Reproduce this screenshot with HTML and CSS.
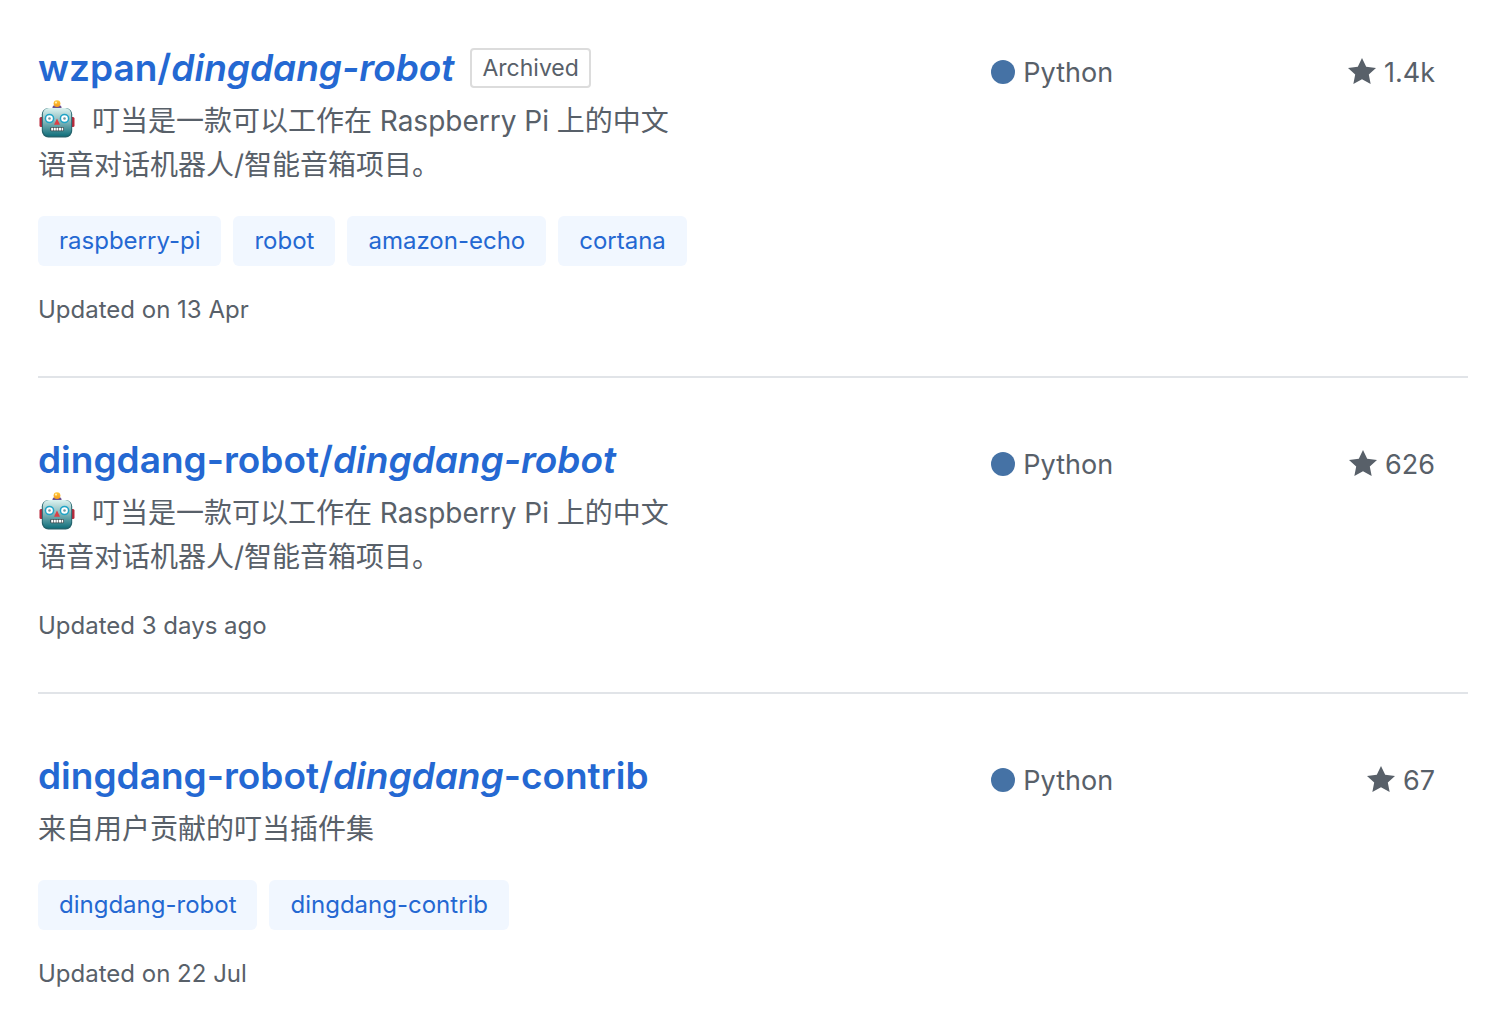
FILE: index.html
```html
<!DOCTYPE html>
<html lang="en">
<head>
    <meta charset="UTF-8">
    <meta name="viewport" content="width=device-width, initial-scale=1.0">
    <title>Repository search results</title>
    <link rel="stylesheet" href="styles.css">
</head>
<body>

<!-- shared icons -->
<svg class="icon-defs" aria-hidden="true">
    <defs>
        <linearGradient id="face" x1="0" y1="0" x2="0" y2="1">
            <stop offset="0" stop-color="#dcf3f0"/>
            <stop offset="0.45" stop-color="#8cbcbf"/>
            <stop offset="1" stop-color="#12707c"/>
        </linearGradient>
        <linearGradient id="bulb" x1="0" y1="0" x2="0" y2="1">
            <stop offset="0" stop-color="#ffc83a"/>
            <stop offset="1" stop-color="#f59a1c"/>
        </linearGradient>
    </defs>
    <symbol id="robot" viewBox="0 0 36 38">
        <ellipse cx="18" cy="7.4" rx="4.5" ry="2.4" fill="#6d5391"/>
        <circle cx="18" cy="3.6" r="3.4" fill="url(#bulb)"/>
        <circle cx="17" cy="2.6" r="1.1" fill="#fff0b0"/>
        <rect x="0.5" y="17" width="4" height="10" rx="1.5" fill="#b8283a"/>
        <rect x="31.5" y="17" width="4" height="10" rx="1.5" fill="#b8283a"/>
        <rect x="2.8" y="8" width="30.4" height="29.4" rx="6.5" fill="#24636c"/>
        <rect x="3.8" y="8" width="28.4" height="28" rx="6" fill="url(#face)"/>
        <circle cx="10.5" cy="18.5" r="4.8" fill="#1fa3c6"/>
        <circle cx="10.5" cy="18.5" r="3.3" fill="#fff"/>
        <circle cx="10.5" cy="18.5" r="1.3" fill="#6f98a0"/>
        <circle cx="25.5" cy="18.5" r="4.8" fill="#1fa3c6"/>
        <circle cx="25.5" cy="18.5" r="3.3" fill="#fff"/>
        <circle cx="25.5" cy="18.5" r="1.3" fill="#6f98a0"/>
        <path d="M18 18.5l3 6.2h-6z" fill="#dc3f45"/>
        <rect x="11.3" y="27" width="13.6" height="4.2" rx="1.2" fill="#37474b"/>
        <path d="M12.2 27.8h2v2.6h-2zM14.8 27.8h2v2.6h-2zM17.4 27.8h2v2.6h-2zM20 27.8h2v2.6h-2zM22.6 27.8h1.6v2.6h-1.6z" fill="#fff"/>
    </symbol>
    <symbol id="star" viewBox="0 0 14 16">
        <path d="M14 6l-4.9-.64L7 1 4.9 5.36 0 6l3.6 3.26L2.67 14 7 11.67 11.33 14l-.93-4.74L14 6z"/>
    </symbol>
</svg>

<ul class="repo-list">
    <li class="repo">
        <div class="repo-info">
            <h3 class="repo-title">
                <a href="#">wzpan/<em>dingdang-robot</em></a>
                <span class="label">Archived</span>
            </h3>
            <p class="description"><svg class="emoji" role="img" aria-label="robot"><use href="#robot"/></svg> 叮当是一款可以工作在 Raspberry Pi 上的中文语音对话机器人/智能音箱项目。</p>
            <div class="topics">
                <a class="topic" href="#">raspberry-pi</a>
                <a class="topic" href="#">robot</a>
                <a class="topic" href="#">amazon-echo</a>
                <a class="topic" href="#">cortana</a>
            </div>
            <p class="updated">Updated on 13 Apr</p>
        </div>
        <div class="language"><span class="language-color"></span>Python</div>
        <div class="stars">
            <a href="#"><svg class="star"><use href="#star"/></svg>1.4k</a>
        </div>
    </li>

    <li class="repo">
        <div class="repo-info">
            <h3 class="repo-title">
                <a href="#">dingdang-robot/<em>dingdang-robot</em></a>
            </h3>
            <p class="description"><svg class="emoji" role="img" aria-label="robot"><use href="#robot"/></svg> 叮当是一款可以工作在 Raspberry Pi 上的中文语音对话机器人/智能音箱项目。</p>
            <p class="updated">Updated 3 days ago</p>
        </div>
        <div class="language"><span class="language-color"></span>Python</div>
        <div class="stars">
            <a href="#"><svg class="star"><use href="#star"/></svg>626</a>
        </div>
    </li>

    <li class="repo">
        <div class="repo-info">
            <h3 class="repo-title">
                <a href="#">dingdang-robot/<em>dingdang</em>-contrib</a>
            </h3>
            <p class="description">来自用户贡献的叮当插件集</p>
            <div class="topics">
                <a class="topic" href="#">dingdang-robot</a>
                <a class="topic" href="#">dingdang-contrib</a>
            </div>
            <p class="updated">Updated on 22 Jul</p>
        </div>
        <div class="language"><span class="language-color"></span>Python</div>
        <div class="stars">
            <a href="#"><svg class="star"><use href="#star"/></svg>67</a>
        </div>
    </li>
</ul>

</body>
</html>
```
FILE: styles.css
```css
* {
    box-sizing: border-box;
}

body {
    margin: 0;
    background-color: #fff;
    color: #586069;
    font-family: Inter, "Noto Sans CJK SC", sans-serif;
    font-size: 27px;
    line-height: 44px;
}

a {
    color: #2468d2;
    text-decoration: none;
}

a:hover {
    text-decoration: underline;
}

.icon-defs {
    position: absolute;
    width: 0;
    height: 0;
}

.repo-list {
    list-style: none;
    margin: 0;
    padding: 0 22px 0 38px;
}

.repo {
    display: grid;
    grid-template-columns: 8fr 2fr 2fr;
    padding: 57px 0 48px;
    border-bottom: 2px solid #e1e4e8;
}

.repo:first-child {
    padding-top: 43px;
}

.repo:last-child {
    padding-bottom: 16px;
    border-bottom: 0;
}

.repo-title {
    display: flex;
    align-items: center;
    gap: 16px;
    margin: 0 0 6px;
    font-size: 37px;
    font-weight: 600;
    line-height: 50px;
}

.label {
    padding: 0 10px;
    border: 2px solid #dcdcdc;
    border-radius: 4px;
    color: #586069;
    font-size: 23px;
    font-weight: 400;
    line-height: 36px;
}

.description {
    width: 68%;
    margin: 0 0 29px;
    font-size: 28px;
}

.emoji {
    width: 38px;
    height: 38px;
    margin-right: 8px;
    vertical-align: -7px;
}

.topics {
    display: flex;
    flex-wrap: wrap;
    gap: 12px;
    margin-bottom: 26px;
}

.topic {
    padding: 0 21px;
    border-radius: 6px;
    background-color: #f1f7ff;
    font-size: 24px;
    line-height: 50px;
}

.updated {
    margin: 0;
    font-size: 24px;
    line-height: 36px;
}

.language,
.stars {
    padding-top: 8px;
}

.language-color {
    display: inline-block;
    width: 24px;
    height: 24px;
    margin-right: 8px;
    border-radius: 50%;
    background-color: #4572a5;
    vertical-align: -2px;
}

.stars {
    padding-right: 33px;
    text-align: right;
}

.stars a {
    color: #586069;
}

.star {
    width: 28px;
    height: 32px;
    margin-right: 8px;
    fill: #586069;
    vertical-align: -6px;
}
```
